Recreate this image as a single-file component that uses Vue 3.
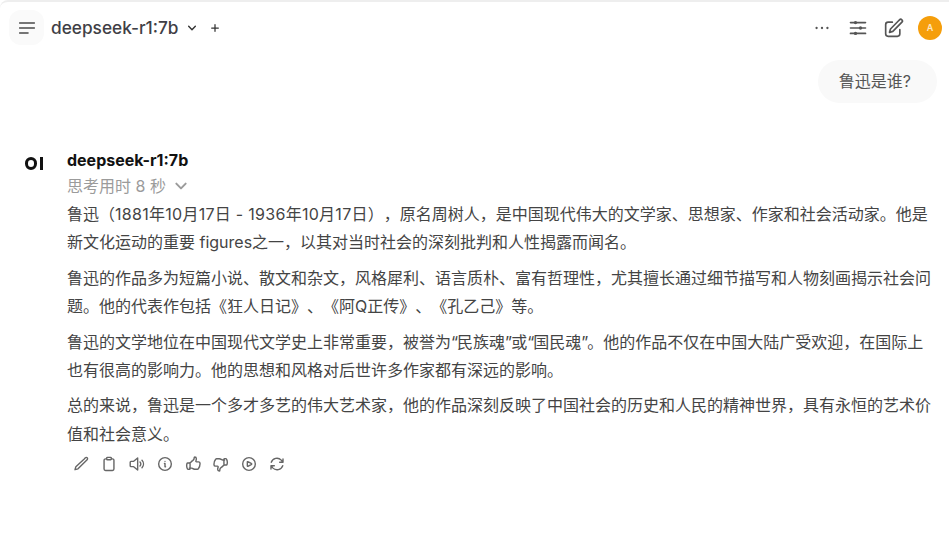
<script setup>
const paragraphs = [
  '鲁迅（1881年10月17日 - 1936年10月17日），原名周树人，是中国现代伟大的文学家、思想家、作家和社会活动家。他是新文化运动的重要 figures之一，以其对当时社会的深刻批判和人性揭露而闻名。',
  '鲁迅的作品多为短篇小说、散文和杂文，风格犀利、语言质朴、富有哲理性，尤其擅长通过细节描写和人物刻画揭示社会问题。他的代表作包括《狂人日记》、《阿Q正传》、《孔乙己》等。',
  '鲁迅的文学地位在中国现代文学史上非常重要，被誉为“民族魂”或“国民魂”。他的作品不仅在中国大陆广受欢迎，在国际上也有很高的影响力。他的思想和风格对后世许多作家都有深远的影响。',
  '总的来说，鲁迅是一个多才多艺的伟大艺术家，他的作品深刻反映了中国社会的历史和人民的精神世界，具有永恒的艺术价值和社会意义。'
]
const segments = (text) => text.split(/([“”]|1881年10月17日 - 1936年10月17日)/).filter(Boolean)
const segmentClass = (s) => (s === '“' || s === '”' ? 'quote' : s.startsWith('1881') ? 'date' : '')
const actions = [
  'M16.86 4.49l1.69-1.69a1.88 1.88 0 1 1 2.65 2.65L7.5 19.2l-4.5 1.3 1.3-4.5L16.86 4.49z',
  'M8.6 4.3H6.8a2.2 2.2 0 0 0-2.2 2.2v13a2.2 2.2 0 0 0 2.2 2.2h10.4a2.2 2.2 0 0 0 2.2-2.2v-13a2.2 2.2 0 0 0-2.2-2.2h-1.8M9.5 2h5a.9.9 0 0 1 .9.9v1.9a.9.9 0 0 1-.9.9h-5a.9.9 0 0 1-.9-.9V2.9a.9.9 0 0 1 .9-.9z',
  'M13 3v18l-6-5H3a1.2 1.2 0 0 1-1.2-1.2V9.2A1.2 1.2 0 0 1 3 8h4l6-5zM16.5 9a4.2 4.2 0 0 1 0 6M19.5 6.5a8 8 0 0 1 0 11',
  'M21.5 12a9.5 9.5 0 1 1-19 0 9.5 9.5 0 0 1 19 0zM11.2 11.2h.8v5h.8M12 8h.01',
  'M6.6 10.5c.8 0 1.6-.5 2.1-1.1a11 11 0 0 1 2.8-2.5c.9-.6 1.7-1.3 2-2.4.2-.7.3-1.4.3-2.1a.8.8 0 0 1 .8-.8A2.4 2.4 0 0 1 17 4c0 1.2-.3 2.3-.7 3.3-.3.6.2 1.5.9 1.5h3.2c1 0 2 .8 2.1 1.9 0 .5 0 .9 0 1.3 0 2.7-.9 5.1-2.5 7.1-.3.4-.9.7-1.4.7h-4a4 4 0 0 1-1.5-.3l-3-1.2a4 4 0 0 0-1.5-.3H6.6M6.6 10.5H3.9a1 1 0 0 0-.9.7 11 11 0 0 0-.5 3.3c0 1.8.4 3.4 1.2 4.9.2.4.7.6 1.1.6h1.9a1 1 0 0 0 .9-1v-7.5a1 1 0 0 0-1-1z',
  'M17.4 13.5c-.8 0-1.6.5-2.1 1.1a11 11 0 0 1-2.8 2.5c-.9.6-1.7 1.3-2 2.4-.2.7-.3 1.4-.3 2.1a.8.8 0 0 1-.8.8A2.4 2.4 0 0 1 7 20c0-1.2.3-2.3.7-3.3.3-.6-.2-1.5-.9-1.5H3.6c-1 0-2-.8-2.1-1.9v-1.3c0-2.7.9-5.1 2.5-7.1.3-.4.9-.7 1.4-.7h4a4 4 0 0 1 1.5.3l3 1.2a4 4 0 0 0 1.5.3h2M17.4 13.5h2.7a1 1 0 0 0 .9-.7 11 11 0 0 0 .5-3.3c0-1.8-.4-3.4-1.2-4.9-.2-.4-.7-.6-1.1-.6h-1.8a1 1 0 0 0-1 1v7.5a1 1 0 0 0 1 1z',
  'M21.5 12a9.5 9.5 0 1 1-19 0 9.5 9.5 0 0 1 19 0zM15.9 11.6a.5.5 0 0 1 0 .8l-5.6 3.1a.5.5 0 0 1-.8-.4V8.9a.5.5 0 0 1 .8-.4l5.6 3.1z',
  'M16 9.3h5V4.4M2.98 19.6v-5h5M3.4 9.5a9 9 0 0 1 15-3.3L21 9.3M20.6 14.5a9 9 0 0 1-15 3.3L3 14.7'
]
</script>

<template>
  <div class="app">
    <header class="topbar">
      <div class="left">
        <button class="menu" aria-label="菜单">
          <svg width="20" height="20" viewBox="0 0 24 24" fill="none" stroke="currentColor" stroke-width="2" stroke-linecap="round">
            <path d="M3.2 6h17.6M3.2 12h17.6M3.2 18h10" />
          </svg>
        </button>
        <span class="model">deepseek-r1:7b</span>
        <svg class="chev" width="10" height="10" viewBox="0 0 24 24" fill="none" stroke="currentColor" stroke-width="3.4" stroke-linecap="round" stroke-linejoin="round">
          <path d="M4 8l8 8 8-8" />
        </svg>
        <svg class="plus" width="10" height="10" viewBox="0 0 24 24" fill="none" stroke="currentColor" stroke-width="3" stroke-linecap="round">
          <path d="M12 4v16M4 12h16" />
        </svg>
      </div>
      <div class="right">
        <svg width="20" height="20" viewBox="0 0 24 24" fill="currentColor">
          <circle cx="5.5" cy="12" r="1.4" /><circle cx="12" cy="12" r="1.4" /><circle cx="18.5" cy="12" r="1.4" />
        </svg>
        <svg width="20" height="20" viewBox="0 0 24 24" fill="none" stroke="currentColor" stroke-width="2" stroke-linecap="round">
          <path d="M3 5.5h18M3 12h18M3 18.5h18" />
          <circle cx="9" cy="5.5" r="2" fill="currentColor" stroke="none" />
          <circle cx="15" cy="12" r="2" fill="currentColor" stroke="none" />
          <circle cx="9" cy="18.5" r="2" fill="currentColor" stroke="none" />
        </svg>
        <svg width="20" height="20" viewBox="0 0 24 24" fill="none" stroke="currentColor" stroke-width="2" stroke-linecap="round" stroke-linejoin="round">
          <path d="M16.9 3.9l1.7-1.7a2 2 0 1 1 2.9 2.8L10.6 16l-4 1.2 1.2-4L16.9 3.9z" />
          <path d="M19 14v5a3 3 0 0 1-3 3H5a3 3 0 0 1-3-3V8a3 3 0 0 1 3-3h5" />
        </svg>
        <div class="avatar">A</div>
      </div>
    </header>

    <main class="chat">
      <div class="user-row">
        <div class="bubble">鲁迅是谁?</div>
      </div>
      <section class="reply">
        <div class="logo"><span class="logo-o"></span><span class="logo-i"></span></div>
        <div class="body">
          <div class="name">deepseek-r1:7b</div>
          <div class="thinking">
            <span>思考用时 8 秒</span>
            <svg width="14" height="14" viewBox="0 0 24 24" fill="none" stroke="currentColor" stroke-width="3.4" stroke-linecap="round" stroke-linejoin="round">
              <path d="M4 8l8 8 8-8" />
            </svg>
          </div>
          <p v-for="p in paragraphs" :key="p"><span v-for="(s, i) in segments(p)" :key="i" :class="segmentClass(s)">{{ s }}</span></p>
          <div class="actions">
            <svg v-for="d in actions" :key="d" width="16" height="16" viewBox="0 0 24 24" fill="none" stroke="currentColor" stroke-width="2.1" stroke-linecap="round" stroke-linejoin="round">
              <path :d="d" />
            </svg>
          </div>
        </div>
      </section>
    </main>
  </div>
</template>

<style>
html, body { margin: 0; background: #fff; }
</style>

<style scoped>
.app {
  width: 949px;
  height: 533px;
  box-sizing: border-box;
  overflow: hidden;
  background: #fff;
  border-top: 2px solid #eeeeee;
  border-top-left-radius: 8px;
  font-family: Inter, "Noto Sans CJK SC", sans-serif;
  color: #333;
  text-spacing-trim: space-all;
}
.topbar {
  height: 51px;
  display: flex;
  align-items: center;
  justify-content: space-between;
  padding: 0 7px 0 9px;
}
.left, .right { display: flex; align-items: center; }
.menu {
  width: 35px;
  height: 35px;
  display: flex;
  align-items: center;
  justify-content: center;
  padding: 0;
  border: none;
  border-radius: 12px;
  background: #fafafa;
  color: #4a4a4a;
}
.model {
  margin-left: 7px;
  font-size: 17.25px;
  font-weight: 500;
  color: #3f3f46;
}
.chev { margin-left: 8px; color: #333; }
.plus { margin-left: 13px; color: #333; }
.right { gap: 16px; color: #555; }
.right .avatar { margin-left: -2px; }
.avatar {
  width: 24px;
  height: 24px;
  border-radius: 50%;
  background: #f59e0b;
  color: #fde8c4;
  display: flex;
  align-items: center;
  justify-content: center;
  font-size: 9px;
  font-weight: 600;
}
.chat { padding: 0 12px 0 25px; }
.user-row {
  display: flex;
  justify-content: flex-end;
  margin-top: 7px;
}
.bubble {
  height: 43px;
  line-height: 43px;
  padding: 0 26px 0 21px;
  border-radius: 22px;
  background: #f9f9f9;
  font-size: 16px;
  color: #555;
}
.reply {
  display: flex;
  margin-top: 46px;
}
.logo {
  width: 42px;
  flex: none;
  display: flex;
  gap: 3px;
  padding-top: 8px;
  height: 14px;
}
.logo-o {
  border: 3px solid #111;
  border-radius: 50%;
  box-sizing: border-box;
  width: 12px;
  height: 12.5px;
}
.logo-i { width: 3px; height: 12.5px; background: #111; }
.body { flex: 1; min-width: 0; }
.name {
  font-size: 16px;
  font-weight: 700;
  line-height: 22px;
  color: #111;
}
.thinking {
  display: flex;
  align-items: center;
  gap: 8px;
  margin-top: 4px;
  font-size: 16px;
  line-height: 22px;
  color: #9b9b9b;
}
p {
  margin: 7.3px 0 0;
  font-size: 16px;
  line-height: 28.25px;
  color: #444;
}
.thinking + p { margin-top: 3px; }
.date { letter-spacing: 0.28px; }
.quote { letter-spacing: -1px; }
.actions {
  display: flex;
  gap: 12px;
  margin-top: 2px;
  padding-left: 6px;
  height: 28px;
  align-items: center;
  color: #666;
}
</style>
